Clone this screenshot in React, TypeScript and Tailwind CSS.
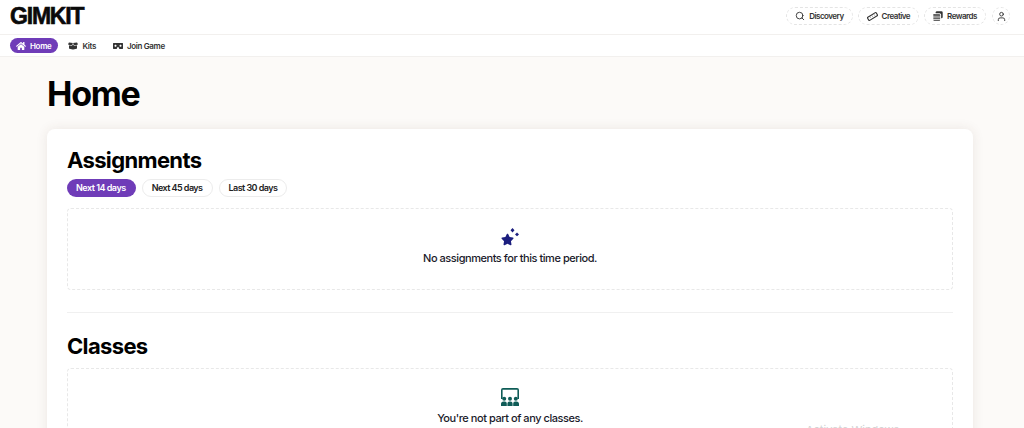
import { FaBoxOpen, FaHome, FaStar, FaVrCardboard } from "react-icons/fa"
import { Search, User } from "lucide-react"

function RulerIcon() {
    return (
        <svg width="11" height="11" viewBox="0 0 16 16" fill="none" stroke="#333" strokeWidth="1.6">
            <rect x="0.6" y="5.4" width="14.8" height="5.2" rx="1" transform="rotate(-32 8 8)" />
            <path d="M5 9.5 4.2 8M8 8 7.2 6.5M11 6.4 10.2 5" strokeWidth="1" />
        </svg>
    )
}

function CoinsIcon() {
    return (
        <svg width="10" height="10" viewBox="0 0 16 16" fill="#333">
            <path d="M6 0.5h7.5A2 2 0 0 1 15.5 2.5v7a2 2 0 0 1-2 2H13V6a2.5 2.5 0 0 0-2.5-2.5H4.4A2 2 0 0 1 6 0.5Z" />
            <path d="M2.5 5H10A1.5 1.5 0 0 1 11.5 6.5v1H.5v-1A1.5 1.5 0 0 1 2.5 5Z" />
            <path d="M.5 8.7h11v1.6H.5zM.5 11.4h11v1.4H.5zM.5 13.8h11A1.6 1.6 0 0 1 10 15.5H2A1.6 1.6 0 0 1 .5 13.8Z" />
        </svg>
    )
}

function ClassroomIcon() {
    return (
        <svg width="20" height="18" viewBox="0 0 20 18" fill="#0f5c57">
            <path d="M3 0h14a2 2 0 0 1 2 2v9h-1.6V1.8H2.6V11H1V2a2 2 0 0 1 2-2z" />
            <circle cx="4.2" cy="10.8" r="2" />
            <circle cx="10" cy="10.8" r="2" />
            <circle cx="15.8" cy="10.8" r="2" />
            <path d="M1 18v-2A2.6 2.6 0 0 1 3.6 13.4h1.2A2 2 0 0 1 6.8 15.4V18zM7.4 18v-2.4a2.2 2.2 0 0 1 2.2-2.2h.8a2.2 2.2 0 0 1 2.2 2.2V18zM13.2 18v-2.6a2 2 0 0 1 2-2h1.2A2.6 2.6 0 0 1 19 16v2z" />
        </svg>
    )
}

function StarIcon() {
    return (
        <div className="relative h-[18px] w-[18px] text-[#1c1f7f]">
            <FaStar className="absolute bottom-0 left-0 text-[13px]" />
            <svg className="absolute right-0 top-0" width="16" height="16" viewBox="0 0 16 16" fill="currentColor">
                <path d="M9.5 0 11.5 2.2 9.5 4.4 7.5 2.2zM14 4.5 16 6.4 14 8.3 12 6.4z" />
            </svg>
        </div>
    )
}

function HeaderButton({ icon, label }: { icon: React.ReactNode; label: string }) {
    return (
        <div className="flex h-[18px] items-center gap-[4px] rounded-full border border-dashed border-[#e4e4e4] pl-[8px] pr-[8px] text-[8px] font-semibold tracking-[-0.5px] text-[#333]">
            {icon}
            {label}
        </div>
    )
}

function Pill({ label, active }: { label: string; active?: boolean }) {
    return (
        <div
            className={
                active
                    ? "flex h-[18px] items-center rounded-full bg-[#6f3cb8] pl-[9px] pr-[10px] text-[9px] font-semibold tracking-[-0.5px] text-white"
                    : "flex h-[18px] items-center rounded-full border border-[#ececec] px-[9px] text-[9px] font-semibold tracking-[-0.55px] text-[#222]"
            }
        >
            {label}
        </div>
    )
}

function EmptyBox({ icon, text, className }: { icon: React.ReactNode; text: string; className: string }) {
    return (
        <div className={"flex flex-col items-center rounded border border-dashed border-[#e8e8e8] " + className}>
            {icon}
            <p className="mt-[4px] text-[11px] font-medium leading-4 tracking-[-0.45px] text-[#1a1a2a]">{text}</p>
        </div>
    )
}

export default function App() {
    return (
        <div className="relative h-[428px] overflow-hidden bg-[#fcfaf8] font-['Inter',sans-serif]">
            {/* TOP BAR */}
            <header className="flex h-[35px] items-center justify-between border-b border-[#f2f0ee] bg-white pb-[2px] pl-[10px] pr-[14px]">
                <span className="font-['Liberation_Sans',sans-serif] text-[23px] font-bold leading-none tracking-[-1.2px] text-[#0a0a0a] [-webkit-text-stroke:0.6px_#0a0a0a]">
                    GIMKIT
                </span>
                <div className="flex items-center gap-[5px]">
                    <HeaderButton icon={<Search size={10} strokeWidth={2.2} />} label="Discovery" />
                    <HeaderButton icon={<RulerIcon />} label="Creative" />
                    <HeaderButton icon={<CoinsIcon />} label="Rewards" />
                    <div className="ml-px flex h-[18px] w-[18px] items-center justify-center rounded-full border border-dashed border-[#e4e4e4] text-[#333]">
                        <User size={11} strokeWidth={2} />
                    </div>
                </div>
            </header>

            {/* NAV */}
            <nav className="flex h-[22px] items-center gap-[10px] border-b border-[#f2f0ee] bg-white pl-[10px] text-[8px] font-semibold tracking-[-0.35px] text-[#333]">
                <div className="flex h-[15px] items-center gap-[4px] rounded-full bg-[#6f3cb8] pl-[6px] pr-[7px] text-white">
                    <FaHome size={10} />
                    Home
                </div>
                <div className="flex items-center gap-[4px]">
                    <FaBoxOpen size={10} />
                    Kits
                </div>
                <div className="ml-[7px] flex items-center gap-[4px]">
                    <FaVrCardboard size={10} />
                    Join Game
                </div>
            </nav>

            <main className="pl-[47px] pr-[51px]">
                <h1 className="mt-[15px] text-[34px] font-bold leading-[44px] tracking-[-1.25px] text-black">Home</h1>

                <section className="mt-[13px] rounded-lg bg-white px-5 pb-4 pt-[18px] shadow-[0_0_12px_rgba(90,60,40,0.1)]">
                    <h2 className="text-[22px] font-bold leading-[26px] tracking-[-0.65px] text-black">Assignments</h2>
                    <div className="mt-[6px] flex gap-[6px]">
                        <Pill label="Next 14 days" active />
                        <Pill label="Next 45 days" />
                        <Pill label="Last 30 days" />
                    </div>
                    <EmptyBox
                        className="mt-[11px] h-[82px] pt-[19px]"
                        icon={<StarIcon />}
                        text="No assignments for this time period."
                    />
                    <div className="mt-[22px] border-t border-[#f0f0f0]" />
                    <h2 className="mt-[20px] text-[22px] font-bold leading-[26px] tracking-[-0.65px] text-black">Classes</h2>
                    <EmptyBox
                        className="mt-[9px] h-[82px] pt-[19px]"
                        icon={<ClassroomIcon />}
                        text="You're not part of any classes."
                    />
                </section>
            </main>

            {/* faint OS watermark */}
            <div className="absolute left-[806px] top-[422px] text-[11px] text-[#d4d4d4]">Activate Windows</div>
        </div>
    )
}
